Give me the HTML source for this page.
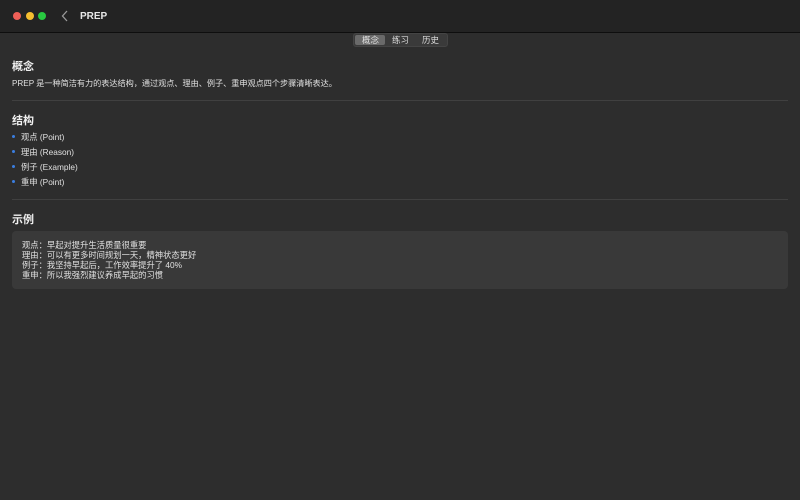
<!DOCTYPE html>
<html><head><meta charset="utf-8"><style>
body{margin:0;width:800px;height:500px;background:#2d2d2d;font-family:"Liberation Sans","Noto Sans CJK SC",sans-serif;color:#e6e6e6;overflow:hidden;position:relative}
.tb{position:absolute;left:0;top:0;width:800px;height:32px;background:#232323;border-bottom:1px solid #0e0e0e}
.d{position:absolute;top:12px;width:8px;height:8px;border-radius:50%}
.t{position:absolute;left:80px;top:11px;font-size:10px;font-weight:bold;color:#e8e8e8}
.seg{position:absolute;left:353px;top:33px;width:93px;height:12px;background:#3a3a3a;border-radius:3px;border:1px solid #444;font-size:8.5px;color:#ddd}
.seg span{position:absolute;top:0;line-height:12px}
.sel{position:absolute;left:1px;top:1px;width:30px;height:10px;background:#6a6a6a;border-radius:2px}
.a{position:absolute;font-size:8.3px;color:#e0e0e0}
h2{position:absolute;margin:0;font-size:11px;font-weight:bold;color:#f0f0f0;left:12px}
.hr{position:absolute;left:12px;width:776px;height:1px;background:#404040}
.b{position:absolute;left:12px;width:3px;height:3px;border-radius:50%;background:#3b7ee0}
.box{position:absolute;left:12px;top:231px;width:776px;height:58px;background:#393939;border-radius:4px}
.ex{position:absolute;left:22px;top:240px;font-size:8.3px;line-height:10px;color:#e0e0e0}
</style></head><body>
<div class="tb">
<div class="d" style="left:13px;background:#ee5f57"></div>
<div class="d" style="left:26px;background:#f5bd2f"></div>
<div class="d" style="left:38px;background:#28c840"></div>
<svg style="position:absolute;left:61px;top:10px" width="8" height="12"><path d="M6 1L1.5 6L6 11" stroke="#9a9a9a" stroke-width="1.3" fill="none"/></svg>
<div class="t">PREP</div>
</div>
<div class="seg"><div class="sel"></div><span style="left:8px">概念</span><span style="left:38px">练习</span><span style="left:68px">历史</span></div>
<h2 style="top:58px">概念</h2>
<div class="a" style="left:12px;top:78px;font-size:8.15px">PREP 是一种简洁有力的表达结构，通过观点、理由、例子、重申观点四个步骤清晰表达。</div>
<div class="hr" style="top:100px"></div>
<h2 style="top:112px">结构</h2>
<div class="b" style="top:135px"></div><div class="a" style="left:21px;top:131px">观点 (Point)</div>
<div class="b" style="top:150px"></div><div class="a" style="left:21px;top:146px">理由 (Reason)</div>
<div class="b" style="top:165px"></div><div class="a" style="left:21px;top:161px">例子 (Example)</div>
<div class="b" style="top:180px"></div><div class="a" style="left:21px;top:176px">重申 (Point)</div>
<div class="hr" style="top:199px"></div>
<h2 style="top:211px">示例</h2>
<div class="box"></div>
<div class="ex">观点：早起对提升生活质量很重要<br>理由：可以有更多时间规划一天，精神状态更好<br>例子：我坚持早起后，工作效率提升了 40%<br>重申：所以我强烈建议养成早起的习惯</div>
</body></html>
